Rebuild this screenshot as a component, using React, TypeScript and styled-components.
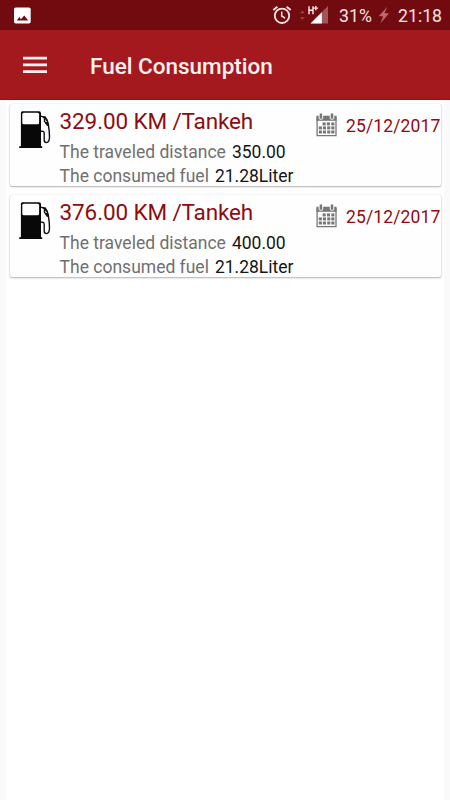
import React from "react";
import styled, { createGlobalStyle } from "styled-components";

const GlobalStyle = createGlobalStyle`
  * { box-sizing: border-box; }
  body { margin: 0; background: #fafafa; font-family: Roboto, "Noto Sans", sans-serif; }
`;

const Screen = styled.div`
  width: 450px;
  height: 800px;
  display: flex;
  flex-direction: column;
  overflow: hidden;
  background: #fafafa;
`;

const StatusBar = styled.header`
  flex: none;
  height: 30px;
  display: flex;
  align-items: center;
  padding: 0 8px 0 14px;
  background: #720b0f;
  color: #f8e4e4;
`;

const StatusIcons = styled.div`
  display: flex;
  align-items: center;
  margin-left: auto;
`;

const StatusText = styled.span<{ $width: number }>`
  width: ${(p) => p.$width}px;
  font-size: 17.7px;
  line-height: 30px;
  padding-top: 1px;
  white-space: nowrap;
`;

const Toolbar = styled.nav`
  flex: none;
  height: 70px;
  display: flex;
  align-items: center;
  padding: 2px 23px 0;
  background: #a4191d;
  border-bottom: 1px solid #8d1519;
`;

const MenuButton = styled.button`
  width: 67px;
  height: 24px;
  padding: 0;
  border: 0;
  background: none;
  text-align: left;
  svg { display: block; }
`;

const Title = styled.h1`
  margin: 0;
  font-size: 22.5px;
  font-weight: 500;
  line-height: 30px;
  color: #fdf0f0;
`;

const List = styled.main`
  flex: 1;
  margin: 0 6px;
  padding: 4px 3.5px 0 4px;
  display: flex;
  flex-direction: column;
  gap: 9px;
  background: #fff;
`;

const Card = styled.article`
  height: 82px;
  display: flex;
  padding-left: 9px;
  border-radius: 2px;
  background: #fefefe;
  box-shadow: 0 1px 2px rgba(0, 0, 0, 0.3), 0 0 1px rgba(0, 0, 0, 0.2);
`;

const PumpBox = styled.div`
  width: 40.6px;
  padding-top: 6px;
  svg { display: block; }
`;

const Details = styled.div`
  width: 256.4px;
  white-space: nowrap;
`;

const Economy = styled.h2`
  margin: 0 0 2px;
  font-size: 22.5px;
  font-weight: 400;
  line-height: 34px;
  letter-spacing: -0.13px;
  color: #8e0c10;
`;

const Measure = styled.p`
  margin: 0;
  display: flex;
  gap: 6px;
  font-size: 17.5px;
  line-height: 24px;
  color: #707070;
`;

const Amount = styled.span`
  color: #151515;
`;

const DateBox = styled.div`
  display: flex;
  padding-top: 9px;
  height: 36px;
  gap: 9px;
  color: #8e0c10;
  svg { flex: none; }
`;

const DateText = styled.time`
  font-size: 17.5px;
  line-height: 26px;
  letter-spacing: 0.14px;
`;

const PictureIcon = () => (
  <svg width="17" height="17" viewBox="0 0 17 17">
    <rect x="0" y="0.5" width="16.7" height="16" rx="1.8" fill="#fff" />
    <path d="M2.8 13.4 5.3 10.1 7 12.3 10.2 8.5 14.3 13.4Z" fill="#720b0f" />
  </svg>
);

const AlarmIcon = () => (
  <svg width="20" height="20" viewBox="0 0 20 20" fill="none" stroke="#f8e4e4">
    <circle cx="10" cy="10.8" r="7.2" strokeWidth="1.8" />
    <path d="M1.3 5 5.4 1.7M18.7 5 14.6 1.7" strokeWidth="1.9" />
    <path d="M9.7 6.5V11L13.1 13.2" strokeWidth="1.5" />
  </svg>
);

const SignalIcon = () => (
  <svg width="30" height="22" viewBox="0 0 30 22">
    <path d="M.2 9.3 2.4 6.7 4.6 9.3ZM.2 13.2h4.4l-2.2 2.6Z" fill="#a34b4e" />
    <path d="M28 2V19.5H10.5Z" fill="#a25558" />
    <path d="M21.8 8.2V19.5H10.5Z" fill="#fff" />
    <path d="M9 2.2V10.3M13 2.2V10.3M9 6.2H13M13.7 4.1H17.9M15.8 2V6.2" fill="none" stroke="#fceeee" strokeWidth="1.4" />
  </svg>
);

const BoltIcon = () => (
  <svg width="12" height="20" viewBox="0 0 12 20">
    <path d="M9.3 1.8.9 10.9 5.2 11.4 2.3 18.6 10.9 8.6 6.5 8.1Z" fill="#b96a6d" />
  </svg>
);

const PumpIcon = () => (
  <svg width="33" height="40" viewBox="0 0 33 40">
    <path d="M3.4 1.2H20q2 0 2 2V36.2h1.2v1.9H.2v-1.9h1.7V2.7q0-1.5 1.5-1.5Z" fill="#080808" />
    <rect x="3.3" y="2.8" width="16.8" height="11.5" rx="1.5" fill="#fefefe" />
    <path d="M22 6.2 25.2 7.4M22 21.3h1.5q1.7 0 1.7 1.8v7q0 2.5 2.3 2.5 2.8 0 3-5.3.1-5.8-1.2-12.8L28 11" fill="none" stroke="#111" strokeWidth="1.4" />
    <path d="M22.8 6.1 26.5 6.3 28.8 9.7 30.2 15.5 28 16 24.8 11.5 24.7 8.1Z" fill="#111" />
    <path d="M26.2 9.3 28 11.8 26.4 12Z" fill="#fff" />
  </svg>
);

const calendarCells = [
  [6.2, 10], [10.5, 10], [14.9, 10],
  [2.4, 14], [6.5, 14], [10.8, 14], [14.9, 14],
  [2.4, 18.1], [6.5, 18.1], [10.8, 18.1], [14.9, 18.1],
];

const CalendarIcon = () => (
  <svg width="21" height="25" viewBox="-0.4 0.6 21 25">
    <path d="M.7 5H19.6V23.3H.7Z" fill="#fff" stroke="#777" strokeWidth="1.3" />
    <path d="M.1 3.3h20v5.1H.1Z" fill="#777" />
    {[2.7, 13.8].map((x) => (
      <rect key={x} x={x} y="0.6" width="3.6" height="6.2" rx="1" fill="#777" stroke="#fff" strokeWidth="1" />
    ))}
    {calendarCells.map(([x, y]) => (
      <rect key={`${x}-${y}`} x={x} y={y} width="3.1" height="3" fill="#777" />
    ))}
  </svg>
);

interface Entry {
  economy: string;
  distance: string;
  fuel: string;
  date: string;
}

const entries: Entry[] = [
  { economy: "329.00", distance: "350.00", fuel: "21.28", date: "25/12/2017" },
  { economy: "376.00", distance: "400.00", fuel: "21.28", date: "25/12/2017" },
];

const FuelCard = ({ economy, distance, fuel, date }: Entry) => (
  <Card>
    <PumpBox><PumpIcon /></PumpBox>
    <Details>
      <Economy>{economy} KM /Tankeh</Economy>
      <Measure>The traveled distance <Amount>{distance}</Amount></Measure>
      <Measure>The consumed fuel <Amount>{fuel}Liter</Amount></Measure>
    </Details>
    <DateBox>
      <CalendarIcon />
      <DateText>{date}</DateText>
    </DateBox>
  </Card>
);

const Gap = styled.span<{ $size: number }>`
  width: ${(p) => p.$size}px;
`;

export default function App() {
  return (
    <Screen>
      <GlobalStyle />
      <StatusBar>
        <PictureIcon />
        <StatusIcons>
          <AlarmIcon />
          <Gap $size={8} />
          <SignalIcon />
          <Gap $size={9} />
          <StatusText $width={39}>31%</StatusText>
          <BoltIcon />
          <Gap $size={8} />
          <StatusText $width={44}>21:18</StatusText>
        </StatusIcons>
      </StatusBar>
      <Toolbar>
        <MenuButton aria-label="Menu">
          <svg width="24" height="24" viewBox="0 0 24 24" fill="#fff0f0">
            <path d="M0 2.8h24v2.7H0ZM0 9.6h24v2.7H0ZM0 16.3h24v2.7H0Z" />
          </svg>
        </MenuButton>
        <Title>Fuel Consumption</Title>
      </Toolbar>
      <List>
        {entries.map((entry) => <FuelCard key={entry.economy} {...entry} />)}
      </List>
    </Screen>
  );
}
